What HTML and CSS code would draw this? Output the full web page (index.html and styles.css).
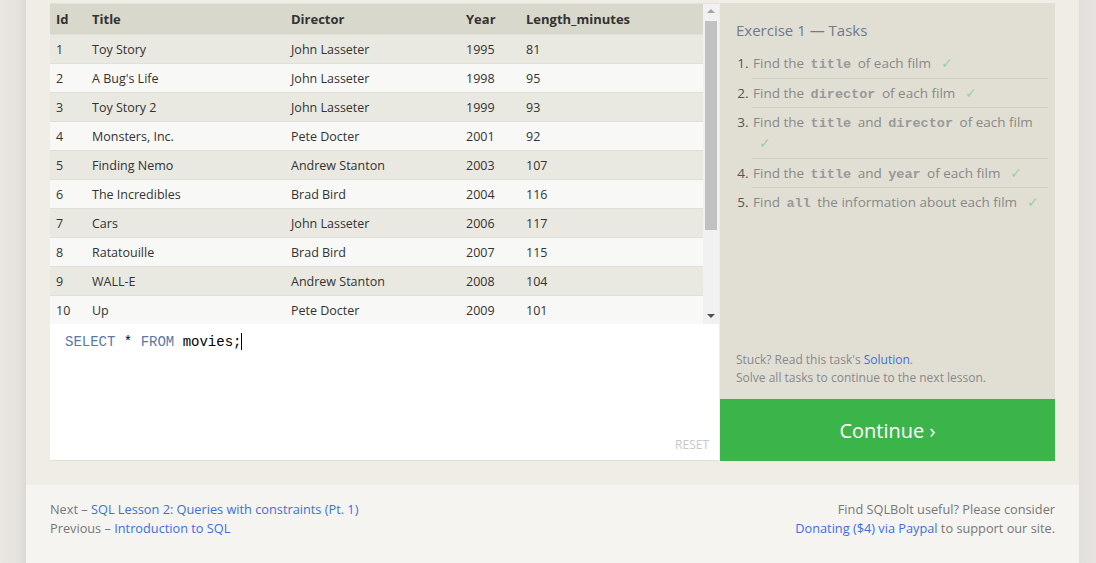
FILE: index.html
```html
<!DOCTYPE html>
<html>
<head>
<meta charset="utf-8">
<link rel="stylesheet" href="styles.css">
</head>
<body>
<div class="page">
  <div class="content">
    <div class="exercise">
      <div class="left">
        <div class="results">
          <div class="table-wrap">
            <table class="movies">
              <thead>
                <tr><th class="c-id">Id</th><th class="c-title">Title</th><th class="c-dir">Director</th><th class="c-year">Year</th><th>Length_minutes</th></tr>
              </thead>
              <tbody>
                <tr><td>1</td><td>Toy Story</td><td>John Lasseter</td><td>1995</td><td>81</td></tr>
                <tr><td>2</td><td>A Bug's Life</td><td>John Lasseter</td><td>1998</td><td>95</td></tr>
                <tr><td>3</td><td>Toy Story 2</td><td>John Lasseter</td><td>1999</td><td>93</td></tr>
                <tr><td>4</td><td>Monsters, Inc.</td><td>Pete Docter</td><td>2001</td><td>92</td></tr>
                <tr><td>5</td><td>Finding Nemo</td><td>Andrew Stanton</td><td>2003</td><td>107</td></tr>
                <tr><td>6</td><td>The Incredibles</td><td>Brad Bird</td><td>2004</td><td>116</td></tr>
                <tr><td>7</td><td>Cars</td><td>John Lasseter</td><td>2006</td><td>117</td></tr>
                <tr><td>8</td><td>Ratatouille</td><td>Brad Bird</td><td>2007</td><td>115</td></tr>
                <tr><td>9</td><td>WALL-E</td><td>Andrew Stanton</td><td>2008</td><td>104</td></tr>
                <tr><td>10</td><td>Up</td><td>Pete Docter</td><td>2009</td><td>101</td></tr>
              </tbody>
            </table>
          </div>
          <div class="scrollbar">
            <div class="arrow up"></div>
            <div class="track"><div class="thumb"></div></div>
            <div class="arrow down"></div>
          </div>
        </div>
        <div class="editor">
          <div class="code"><span class="kw">SELECT</span> * <span class="kw">FROM</span> movies;<span class="caret"></span></div>
          <div class="reset">RESET</div>
        </div>
      </div>
      <div class="right">
        <div class="tasks">
          <div class="tasks-title">Exercise 1 — Tasks</div>
          <ol class="task-list">
            <li>Find the <code>title</code> of each film <span class="check">✓</span></li>
            <li>Find the <code>director</code> of each film <span class="check">✓</span></li>
            <li>Find the <code>title</code> and <code>director</code> of each film <span class="check">✓</span></li>
            <li>Find the <code>title</code> and <code>year</code> of each film <span class="check">✓</span></li>
            <li>Find <code>all</code> the information about each film <span class="check">✓</span></li>
          </ol>
          <div class="stuck">
            <div>Stuck? Read this task's <a href="#">Solution</a>.</div>
            <div>Solve all tasks to continue to the next lesson.</div>
          </div>
        </div>
        <div class="continue">Continue ›</div>
      </div>
    </div>
  </div>
  <div class="footer">
    <div class="nav">
      <div>Next – <a href="#">SQL Lesson 2: Queries with constraints (Pt. 1)</a></div>
      <div>Previous – <a href="#">Introduction to SQL</a></div>
    </div>
    <div class="donate">
      <div>Find SQLBolt useful? Please consider</div>
      <div><a href="#">Donating ($4) via Paypal</a> to support our site.</div>
    </div>
  </div>
</div>
</body>
</html>
```

FILE: styles.css
```css
html, body {
  margin: 0;
  padding: 0;
  height: 100%;
}
body {
  font-family: "Open Sans", "Noto Sans", sans-serif;
  font-size: 12.5px;
  color: #333;
  background: linear-gradient(to right, #e9e6e2 0, #e6e3df 18px, #dcd8d4 26px, #e2dedb 1079px, #e6e3e0 1096px);
  overflow: hidden;
}
a { color: #3d6fdc; text-decoration: none; }

.page {
  margin-left: 26px;
  width: 1053px;
  height: 100%;
  display: flex;
  flex-direction: column;
  background: #efede6;
}
.content {
  padding: 3px 24px 24px 24px;
}
.exercise {
  display: flex;
  gap: 1px;
  height: 458px;
}
.left {
  width: 669px;
  display: flex;
  flex-direction: column;
}
.results {
  display: flex;
  height: 321px;
  border-top: 1px solid #e4e2da;
  box-sizing: border-box;
  background: #f8f8f7;
  overflow: hidden;
}
.table-wrap {
  width: 653px;
}
.movies {
  width: 100%;
  border-collapse: collapse;
  table-layout: fixed;
}
.movies th {
  background: #d9d8cc;
  font-weight: bold;
  text-align: left;
  height: 30px;
  padding: 0 6px;
  font-size: 13px;
  color: #333;
}
.movies .c-id { width: 24px; }
.movies .c-title { width: 187px; }
.movies .c-dir { width: 163px; }
.movies .c-year { width: 48px; }
.movies td {
  height: 28px;
  padding: 0 6px;
  border-top: 1px solid #e0dfd9;
  white-space: nowrap;
}
.movies tbody tr:nth-child(odd) td { background: #e9e8e1; }
.movies tbody tr:nth-child(even) td { background: #f8f8f7; }

.scrollbar {
  width: 16px;
  background: #f1f1f1;
  display: flex;
  flex-direction: column;
}
.arrow {
  height: 16px;
  position: relative;
}
.arrow::after {
  content: "";
  position: absolute;
  left: 4px;
  width: 0;
  height: 0;
  border-left: 4px solid transparent;
  border-right: 4px solid transparent;
}
.arrow.up::after { top: 5px; border-bottom: 4px solid #a3a3a3; }
.arrow.down::after { top: 6px; border-top: 4px solid #505050; }
.track {
  flex: 1;
  padding: 1px 2px 0 2px;
}
.thumb {
  height: 209px;
  background: #c1c1c1;
}

.editor {
  flex: 1;
  background: #fff;
  border-bottom: 1px solid #e2dfd7;
  position: relative;
}
.code {
  font-family: "Liberation Mono", "DejaVu Sans Mono", monospace;
  font-size: 14px;
  color: #000;
  padding: 9px 15px;
  line-height: 18px;
}
.kw { color: #5a78a8; }
.caret {
  display: inline-block;
  width: 1px;
  height: 17px;
  background: #000;
  vertical-align: -4px;
}
.reset {
  position: absolute;
  right: 10px;
  bottom: 7px;
  font-size: 12px;
  color: #c8c8c8;
}

.right {
  width: 335px;
  display: flex;
  flex-direction: column;
}
.tasks {
  flex: 1;
  background: #e1dfd4;
  display: flex;
  flex-direction: column;
  padding: 16px 7px 12px 16px;
}
.tasks-title {
  font-size: 15px;
  color: #6e7a8c;
  line-height: 22px;
}
.task-list {
  margin: 8px 0 0 16px;
  padding: 0;
  color: #888;
  font-size: 13.5px;
}
.task-list li {
  padding: 4px 0 3.5px 1px;
  line-height: 21px;
  border-bottom: 1px solid #d3d1c6;
}
.task-list li:last-child { border-bottom: none; }
.task-list li::marker { color: #555; }
.task-list code {
  font-family: "Liberation Mono", "DejaVu Sans Mono", monospace;
  font-weight: bold;
  font-size: 13.5px;
  line-height: 1;
  color: #999;
  padding: 0 3px;
}
.check {
  color: #9cd0a1;
  margin-left: 6px;
  line-height: 1;
}
.stuck {
  margin-top: auto;
  font-size: 12px;
  line-height: 18px;
  color: #888;
}
.continue {
  height: 62px;
  background: #3bb54a;
  color: #fff;
  font-size: 20px;
  display: flex;
  align-items: center;
  justify-content: center;
}

.footer {
  flex: 1;
  background: #f5f4f1;
  display: flex;
  justify-content: space-between;
  padding: 15px 24px 0 24px;
  font-size: 12.75px;
  line-height: 19px;
  color: #777;
}
.donate { text-align: right; }
```
